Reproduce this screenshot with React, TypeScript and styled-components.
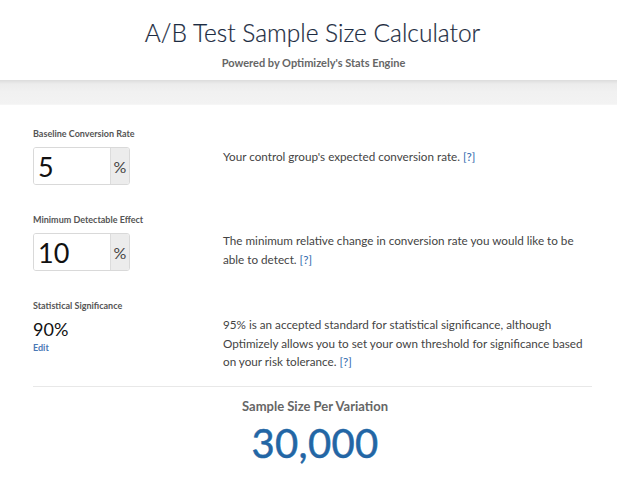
import React, { useState } from "react";
import styled, { createGlobalStyle } from "styled-components";

const GlobalStyle = createGlobalStyle`
  html, body {
    margin: 0;
    padding: 0;
    background: #ffffff;
  }
  body {
    font-family: Lato, "Open Sans", Arial, sans-serif;
    color: #444;
  }
`;

const Page = styled.div`
  width: 617px;
  min-height: 484px;
  overflow: hidden;
`;

const Header = styled.header`
  height: 80px;
  display: flex;
  flex-direction: column;
  align-items: center;
  background: #fff;
`;

const Title = styled.h1`
  margin: 18px 0 0 8px;
  font-size: 24.5px;
  font-weight: 300;
  color: #1c2b41;
  -webkit-text-stroke: 0.2px #1c2b41;
`;

const Subtitle = styled.div`
  margin: 9px 0 0 10px;
  font-size: 11px;
  font-weight: 700;
  color: #666;
`;

const Band = styled.div`
  height: 24px;
  background: linear-gradient(#dcdcdc 0px, #ececec 4px, #f1f1f1 12px, #f3f3f3 100%);
  border-bottom: 1px solid #f6f6f6;
`;

const Content = styled.main`
  padding: 23px 25px 0 33px;
`;

const Row = styled.section`
  display: grid;
  grid-template-columns: 190px 1fr;
  height: 86px;
`;

const Field = styled.div`
  display: flex;
  flex-direction: column;
  align-items: flex-start;
`;

const Label = styled.div`
  font-size: 9px;
  font-weight: 700;
  color: #555;
  line-height: 12px;
`;

const InputGroup = styled.div`
  margin-top: 7px;
  display: flex;
  width: 97px;
  height: 38px;
  border: 1px solid #d9d9d9;
  border-radius: 3px;
  box-sizing: border-box;
  overflow: hidden;
`;

const NumberInput = styled.input`
  width: 72px;
  border: none;
  outline: none;
  padding: 0 0 0 4px;
  font-family: Lato, "Open Sans", Arial, sans-serif;
  font-size: 27px;
  color: #111;
  background: #fff;
`;

const Addon = styled.span`
  flex: 1;
  display: flex;
  align-items: center;
  justify-content: center;
  background: #ececec;
  border-left: 1px solid #dcdcdc;
  font-size: 16px;
  color: #444;
`;

const Value = styled.div`
  margin-top: 6px;
  font-size: 18px;
  color: #111;
`;

const EditLink = styled.a`
  margin-top: 2px;
  font-size: 9px;
  font-weight: 700;
  color: #4a78b5;
  text-decoration: none;
  cursor: pointer;
`;

const Description = styled.p<{ $offset: number }>`
  margin: ${(p) => p.$offset}px 0 0;
  font-size: 11.7px;
  line-height: 18.5px;
  color: #444;
`;

const Help = styled.a`
  color: #2f68ad;
  text-decoration: none;
  cursor: pointer;
`;

const Divider = styled.hr`
  margin: 0;
  border: none;
  border-top: 1px solid #e8e8e8;
`;

const Result = styled.div`
  display: flex;
  flex-direction: column;
  align-items: center;
  padding-top: 11px;
  padding-left: 5px;
`;

const ResultLabel = styled.div`
  font-size: 13px;
  font-weight: 700;
  color: #666;
`;

const ResultValue = styled.div`
  margin-top: 5px;
  font-size: 40px;
  color: #2366a5;
  letter-spacing: 0.3px;
  -webkit-text-stroke: 0.5px #2366a5;
`;

const App: React.FC = () => {
  const [baseline, setBaseline] = useState("5");
  const [effect, setEffect] = useState("10");

  return (
    <Page>
      <GlobalStyle />
      <Header>
        <Title>A/B Test Sample Size Calculator</Title>
        <Subtitle>Powered by Optimizely's Stats Engine</Subtitle>
      </Header>
      <Band />
      <Content>
        <Row>
          <Field>
            <Label>Baseline Conversion Rate</Label>
            <InputGroup>
              <NumberInput
                value={baseline}
                onChange={(e) => setBaseline(e.target.value)}
              />
              <Addon>%</Addon>
            </InputGroup>
          </Field>
          <Description $offset={19}>
            Your control group's expected conversion rate. <Help>[?]</Help>
          </Description>
        </Row>
        <Row>
          <Field>
            <Label>Minimum Detectable Effect</Label>
            <InputGroup>
              <NumberInput
                value={effect}
                onChange={(e) => setEffect(e.target.value)}
              />
              <Addon>%</Addon>
            </InputGroup>
          </Field>
          <Description $offset={17}>
            The minimum relative change in conversion rate you would like to be
            able to detect. <Help>[?]</Help>
          </Description>
        </Row>
        <Row>
          <Field>
            <Label>Statistical Significance</Label>
            <Value>90%</Value>
            <EditLink>Edit</EditLink>
          </Field>
          <Description $offset={15}>
            95% is an accepted standard for statistical significance, although
            Optimizely allows you to set your own threshold for significance
            based on your risk tolerance. <Help>[?]</Help>
          </Description>
        </Row>
        <Divider />
        <Result>
          <ResultLabel>Sample Size Per Variation</ResultLabel>
          <ResultValue>30,000</ResultValue>
        </Result>
      </Content>
    </Page>
  );
};

export default App;
